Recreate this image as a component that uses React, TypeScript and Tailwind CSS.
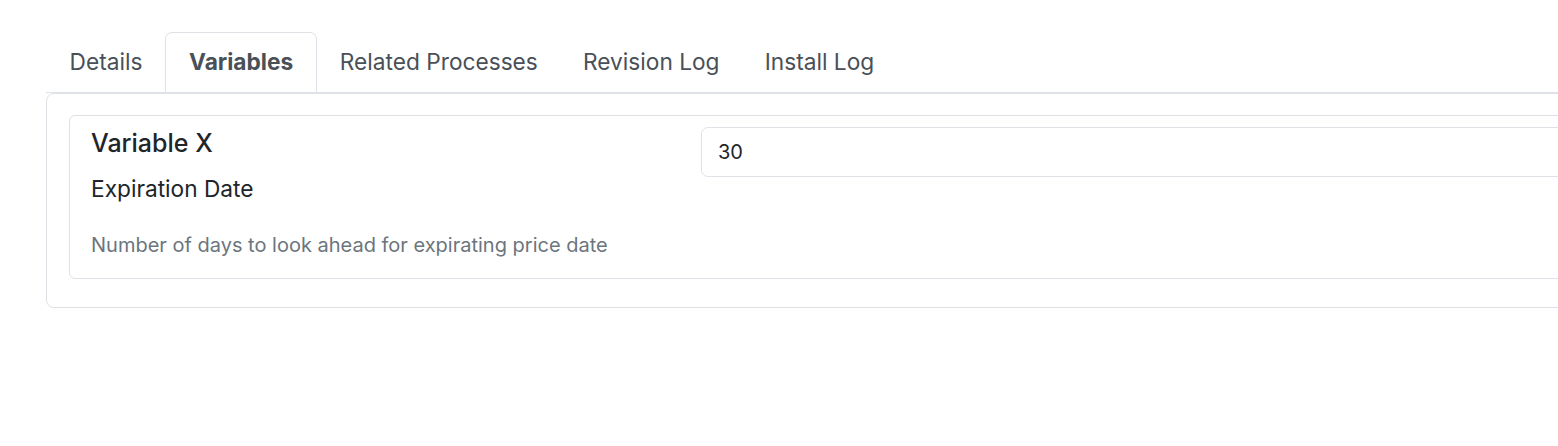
import { useState } from "react";

const tabs = ["Details", "Variables", "Related Processes", "Revision Log", "Install Log"];

export default function App() {
  const [active, setActive] = useState("Variables");
  const [value, setValue] = useState("30");

  return (
    <div className="w-full h-[446px] overflow-hidden bg-white font-['Inter',sans-serif] text-[#212529]">
      <div className="w-[1700px] pl-[46px] pt-[32px]">
        {/* tabs */}
        <div className="flex pl-px border-b border-[#dee2e6]">
          {tabs.map((t) => (
            <button
              key={t}
              onClick={() => setActive(t)}
              className={
                t === active
                  ? "h-[61px] px-[23px] -mb-px text-[22.7px] font-bold text-[#495057] bg-white border border-[#dee2e6] rounded-t-[7px]"
                  : "h-[61px] px-[21.6px] -mb-px text-[22.7px] text-[#495057] border border-transparent"
              }
            >
              {t}
            </button>
          ))}
        </div>

        {/* panel */}
        <div className="border border-[#dee2e6] rounded-[8px] pt-[21px] px-[22px] pb-[28px]">
          <div className="border border-[#dee2e6] rounded-[6px] pl-[21px] pt-[10px] pb-[19px] flex">
            <div className="w-[610px] shrink-0">
              <div className="text-[25px] font-medium leading-[34px] text-[#212529]">Variable X</div>
              <div className="text-[22.7px] leading-[31px] mt-[13px] text-[#212529]">Expiration Date</div>
              <div className="text-[20px] leading-[28px] mt-[27px] text-[#6c757d]">
                Number of days to look ahead for expirating price date
              </div>
            </div>
            <input
              value={value}
              onChange={(e) => setValue(e.target.value)}
              className="flex-1 h-[50px] mt-px px-[16px] text-[20px] text-[#212529] border border-[#dee2e6] rounded-[7px] outline-none"
            />
          </div>
        </div>
      </div>
    </div>
  );
}
